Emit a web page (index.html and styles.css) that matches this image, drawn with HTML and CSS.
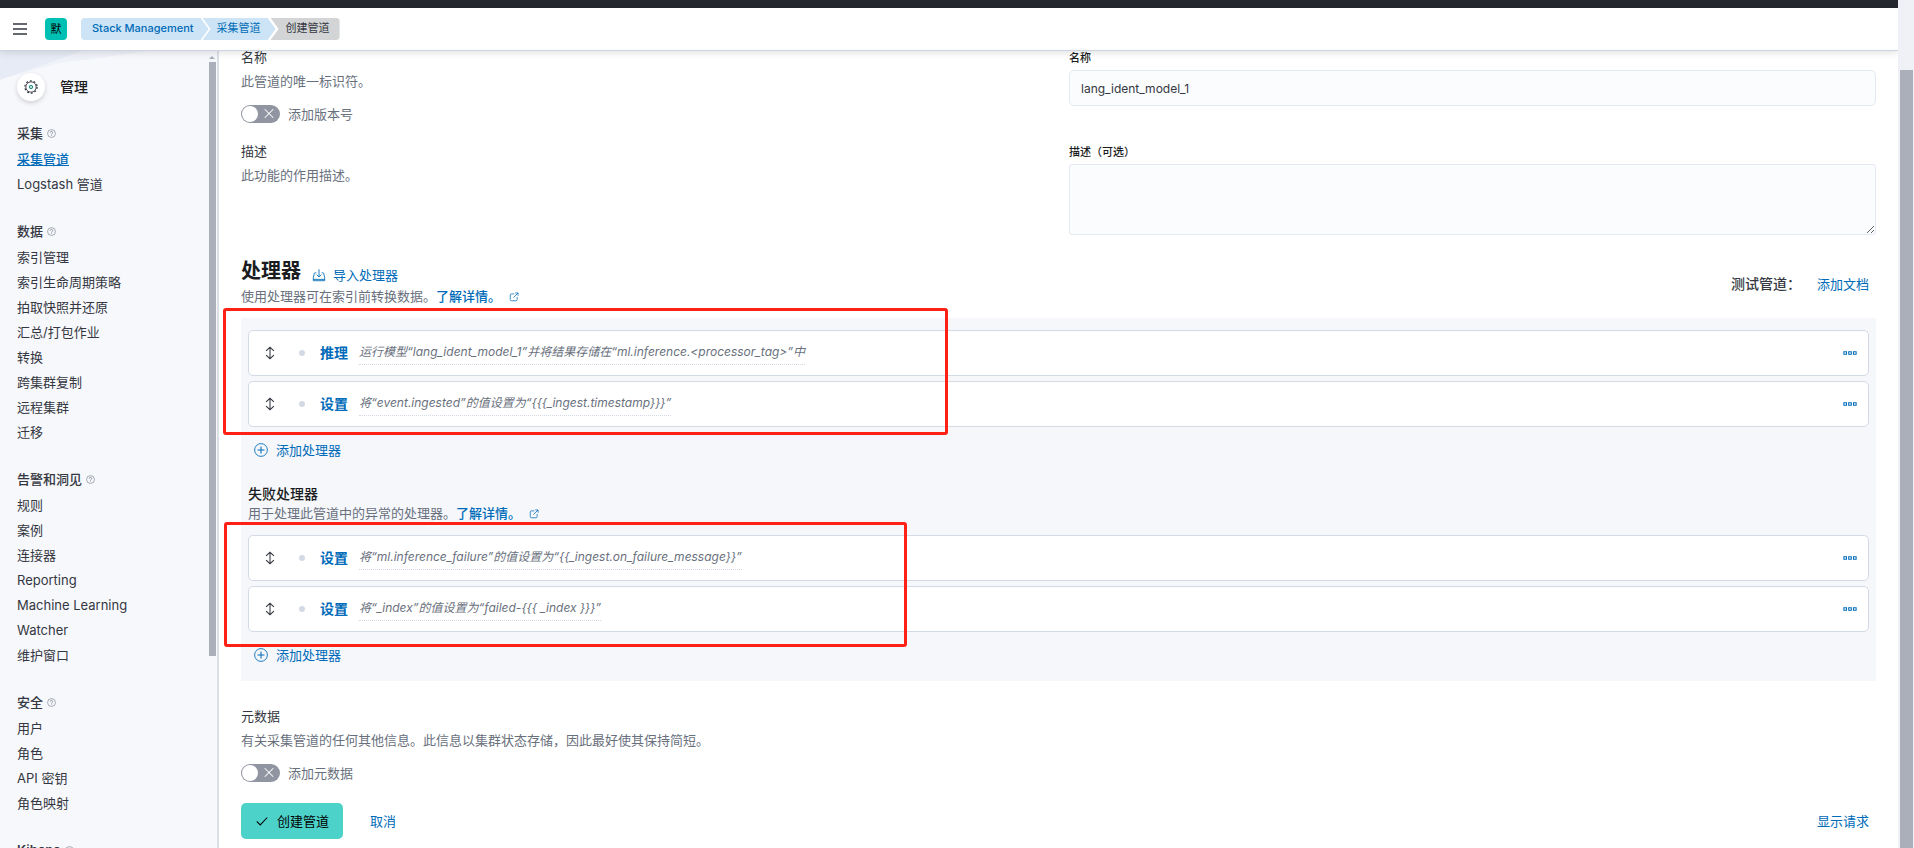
FILE: index.html
```html
<!DOCTYPE html>
<html lang="zh-CN">
<head>
<meta charset="utf-8">
<meta name="viewport" content="width=device-width, initial-scale=1">
<title>创建管道</title>
<link rel="stylesheet" href="styles.css">
</head>
<body>
<svg class="sprite" aria-hidden="true">
  <symbol id="i-help" viewBox="0 0 16 16"><circle cx="8" cy="8" r="7" fill="none" stroke="currentColor"/><path d="M5.8 6.4a2.2 2.2 0 1 1 3.3 1.9c-.7.4-1.1.8-1.1 1.6" fill="none" stroke="currentColor" stroke-width="1.2"/><circle cx="8" cy="11.8" r=".8" fill="currentColor"/></symbol>
  <symbol id="i-import" viewBox="0 0 16 16"><path d="M5 5.500H3.600a1 1 0 0 0-1 .8L1.500 11v3.500h13V11l-1.100-4.700a1 1 0 0 0-1-.8H11M1.500 13h13M8 1.500V10M5.300 7.500 8 10.200l2.700-2.700" fill="none" stroke="currentColor"/></symbol>
  <symbol id="i-popout" viewBox="0 0 16 16"><path d="M8.500 3H4a2 2 0 0 0-2 2v7a2 2 0 0 0 2 2h7a2 2 0 0 0 2-2V8M10 1.500h4.500V6M14.500 1.500 7 9" fill="none" stroke="currentColor" stroke-width="1.200"/></symbol>
  <symbol id="i-sort" viewBox="0 0 16 16"><path d="M8 1.500v13M3.500 5.500 8 1.500l4.500 4M3.500 10.500 8 14.500l4.500-4" fill="none" stroke="currentColor" stroke-width="1.200"/></symbol>
  <symbol id="i-plus" viewBox="0 0 16 16"><circle cx="8" cy="8" r="7.300" fill="none" stroke="currentColor"/><path d="M8 4v8M4 8h8" stroke="currentColor" stroke-width="1.200"/></symbol>
  <symbol id="i-more" viewBox="0 0 16 16"><path d="M1 6.500h3v3H1zM6.500 6.500h3v3h-3zM12 6.500h3v3h-3z" fill="none" stroke="currentColor" stroke-width="1.200"/></symbol>
  <symbol id="i-check" viewBox="0 0 16 16"><path d="m2 8.500 4 4 8-8.500" fill="none" stroke="currentColor" stroke-width="1.200"/></symbol>
</svg>
<div class="page">
  <div class="app">
    <div class="topbar"></div>
    <header class="header">
      <button class="menu" aria-label="菜单"><svg viewBox="0 0 14 12"><path d="M0 1h14M0 6h14M0 11h14" stroke="currentColor" stroke-width="1.600"/></svg></button>
      <button class="space">默</button>
      <nav class="crumbs" aria-label="面包屑">
        <a class="crumb first" href="#">Stack Management</a>
        <a class="crumb mid" href="#">采集管道</a>
        <span class="crumb last">创建管道</span>
      </nav>
    </header>
    <div class="body">
      <aside class="sidebar">
        <div class="side-scroll">
          <svg class="deco" viewBox="0 0 160 30" aria-hidden="true"><path d="M0 0h150L60 12 0 28z" fill="#eff2f9"/><path d="M0 0h82L0 29z" fill="#e6ebf5"/></svg>
          <div class="side-title">
            <span class="gear"><svg viewBox="0 0 16 16"><circle cx="8" cy="8" r="5.900" fill="none" stroke="#343741"/><circle cx="8" cy="8" r="7" fill="none" stroke="#343741" stroke-width="1.400" stroke-dasharray="2.200 2.198"/><circle cx="8" cy="8" r="1.700" fill="none" stroke="#017d73" stroke-width="1.200"/></svg></span>
            <h2>管理</h2>
          </div>
          <nav class="side-nav">
            <section><h3>采集 <svg><use href="#i-help"/></svg></h3>
              <a class="active" href="#">采集管道</a><a href="#">Logstash 管道</a></section>
            <section><h3>数据 <svg><use href="#i-help"/></svg></h3>
              <a href="#">索引管理</a><a href="#">索引生命周期策略</a><a href="#">拍取快照并还原</a><a href="#">汇总/打包作业</a><a href="#">转换</a><a href="#">跨集群复制</a><a href="#">远程集群</a><a href="#">迁移</a></section>
            <section><h3>告警和洞见 <svg><use href="#i-help"/></svg></h3>
              <a href="#">规则</a><a href="#">案例</a><a href="#">连接器</a><a href="#">Reporting</a><a href="#">Machine Learning</a><a href="#">Watcher</a><a href="#">维护窗口</a></section>
            <section><h3>安全 <svg><use href="#i-help"/></svg></h3>
              <a href="#">用户</a><a href="#">角色</a><a href="#">API 密钥</a><a href="#">角色映射</a></section>
            <section><h3>Kibana <svg><use href="#i-help"/></svg></h3></section>
          </nav>
        </div>
        <div class="side-track" aria-hidden="true"><i class="arrow"></i><i class="side-thumb"></i></div>
      </aside>
      <main class="main">
        <div class="row name-row">
          <div class="about">
            <h4>名称</h4>
            <p>此管道的唯一标识符。</p>
            <label class="switch"><input type="checkbox" role="switch"><span class="knob"></span>添加版本号</label>
          </div>
          <div class="field">
            <label for="name">名称</label>
            <input id="name" type="text" value="lang_ident_model_1">
          </div>
        </div>
        <div class="row desc-row">
          <div class="about">
            <h4>描述</h4>
            <p>此功能的作用描述。</p>
          </div>
          <div class="field">
            <label for="desc">描述（可选）</label>
            <textarea id="desc"></textarea>
          </div>
        </div>
        <div class="proc-head">
          <div>
            <div class="proc-title"><h1>处理器</h1><button class="link"><svg><use href="#i-import"/></svg>导入处理器</button></div>
            <p>使用处理器可在索引前转换数据。<a href="#">了解详情。<svg><use href="#i-popout"/></svg></a></p>
          </div>
          <div class="test"><strong>测试管道：</strong><button class="link">添加文档</button></div>
        </div>
        <div class="panel">
          <div class="group">
            <div class="item"><button class="move" aria-label="移动"><svg><use href="#i-sort"/></svg></button><i class="dot"></i><a class="type" href="#">推理</a><span class="text">运行模型“lang_ident_model_1”并将结果存储在“ml.inference.&lt;processor_tag&gt;”中</span><button class="more" aria-label="更多"><svg><use href="#i-more"/></svg></button></div>
            <div class="item"><button class="move" aria-label="移动"><svg><use href="#i-sort"/></svg></button><i class="dot"></i><a class="type" href="#">设置</a><span class="text">将“event.ingested”的值设置为“{{{_ingest.timestamp}}}”</span><button class="more" aria-label="更多"><svg><use href="#i-more"/></svg></button></div>
          </div>
          <button class="link add"><svg><use href="#i-plus"/></svg>添加处理器</button>
          <div class="fail-head">
            <h2>失败处理器</h2>
            <p>用于处理此管道中的异常的处理器。<a href="#">了解详情。<svg><use href="#i-popout"/></svg></a></p>
          </div>
          <div class="group">
            <div class="item"><button class="move" aria-label="移动"><svg><use href="#i-sort"/></svg></button><i class="dot"></i><a class="type" href="#">设置</a><span class="text">将“ml.inference_failure”的值设置为“{{_ingest.on_failure_message}}”</span><button class="more" aria-label="更多"><svg><use href="#i-more"/></svg></button></div>
            <div class="item"><button class="move" aria-label="移动"><svg><use href="#i-sort"/></svg></button><i class="dot"></i><a class="type" href="#">设置</a><span class="text">将“_index”的值设置为“failed-{{{ _index }}}”</span><button class="more" aria-label="更多"><svg><use href="#i-more"/></svg></button></div>
          </div>
          <button class="link add"><svg><use href="#i-plus"/></svg>添加处理器</button>
        </div>
        <div class="about meta">
          <h4>元数据</h4>
          <p>有关采集管道的任何其他信息。此信息以集群状态存储，因此最好使其保持简短。</p>
          <label class="switch"><input type="checkbox" role="switch"><span class="knob"></span>添加元数据</label>
        </div>
        <div class="actions">
          <button class="primary"><svg><use href="#i-check"/></svg>创建管道</button>
          <button class="link">取消</button>
          <button class="link show">显示请求</button>
        </div>
        <div class="mark mark-a"></div>
        <div class="mark mark-b"></div>
      </main>
    </div>
  </div>
  <div class="track" aria-hidden="true"><i class="thumb"></i></div>
</div>
</body>
</html>
```
FILE: styles.css
```css
* { box-sizing: border-box; }
body {
  margin: 0;
  font: 13px/20px Inter, "Noto Sans CJK SC", sans-serif;
  color: #343741;
  background: #fff;
}
h1, h2, h3, h4, p { margin: 0; }
button { font: inherit; color: inherit; border: 0; padding: 0; background: none; cursor: pointer; }
a { color: #006bb8; text-decoration: none; }
svg { flex: none; }
.sprite { position: absolute; width: 0; height: 0; }

.page { display: flex; height: 100vh; overflow: hidden; }
.app { flex: 1; min-width: 0; display: flex; flex-direction: column; }
.track { width: 16px; background: #eff1f6; padding: 70px 1px 0 2px; display: flex; position: relative; z-index: 3; }
.thumb { flex: 1; background: #abafb9; }

.topbar { height: 8px; background: #25282f; flex: none; }
.header {
  height: 43px;
  flex: none;
  display: flex;
  align-items: center;
  padding: 0 13px;
  border-bottom: 1px solid #ccd4e3;
  box-shadow: 0 1px 8px rgba(0, 0, 0, .14);
  position: relative;
  z-index: 2;
  background: #fff;
}
.menu { width: 14px; height: 12px; margin-right: 18px; display: flex; }
.menu svg { width: 14px; height: 12px; }
.space { width: 22px; height: 22px; border-radius: 4px; background: #00bfb3; color: #000; font-size: 11px; line-height: 22px; margin-right: 14px; }
.crumbs { display: flex; font-size: 11px; line-height: 20px; }
.crumb { height: 22px; background: #cce4f5; }
.first { padding: 0 15px 0 11px; font-weight: 500; border-radius: 4px 0 0 4px; clip-path: polygon(0 0, calc(100% - 8px) 0, 100% 50%, calc(100% - 8px) 100%, 0 100%); }
.mid { margin-left: -6px; padding: 0 15px 0 14px; clip-path: polygon(0 0, calc(100% - 8px) 0, 100% 50%, calc(100% - 8px) 100%, 0 100%, 8px 50%); }
.last { margin-left: -5px; padding: 0 10px 0 15px; border-radius: 0 4px 4px 0; background: #d3d4d6; clip-path: polygon(0 0, 100% 0, 100% 100%, 0 100%, 8px 50%); }

.body { flex: 1; min-height: 0; display: flex; }
.sidebar { width: 219px; flex: none; display: flex; background: #f7f8fc; border-right: 2px solid #dcdfe6; overflow: hidden; }
.side-scroll { flex: 1; position: relative; padding: 22px 0 0 17px; }
.deco { position: absolute; left: 0; top: 0; width: 160px; height: 30px; }
.side-title { display: flex; align-items: center; gap: 15px; height: 28px; position: relative; }
.side-title h2 { font-size: 14px; font-weight: 500; color: #1a1c21; }
.gear { width: 28px; height: 28px; border-radius: 50%; background: #fff; box-shadow: 0 2px 5px rgba(0, 0, 0, .16); display: flex; align-items: center; justify-content: center; }
.gear svg { width: 14px; height: 14px; }
.side-nav { padding-top: 18px; display: flex; flex-direction: column; gap: 20px; }
.side-nav section { display: flex; flex-direction: column; align-items: flex-start; }
.side-nav h3 { font-size: 13px; line-height: 28px; font-weight: 500; display: flex; align-items: center; gap: 4px; }
.side-nav h3 svg { width: 9px; height: 9px; color: #69707d; }
.side-nav a { color: #343741; line-height: 25px; }
.side-nav a.active { color: #006bb8; font-weight: 500; text-decoration: underline; }
.side-nav section:last-child h3 { font-weight: 600; }
.side-track { width: 8px; flex: none; margin-right: 1px; padding-top: 5px; display: flex; flex-direction: column; align-items: center; }
.arrow { border: 3px solid transparent; border-top: 0; border-bottom-color: #abafb9; margin-bottom: 3px; }
.side-thumb { width: 7px; height: 594px; background: #abafb9; }

.main { flex: 1; min-width: 0; padding: 0 22px; position: relative; background: #fff; display: flex; flex-direction: column; }
.row { display: grid; grid-template-columns: 1fr 1fr; gap: 21px; }
.name-row { height: 90px; }
.desc-row { padding-top: 4px; }
h4 { font-size: 13px; line-height: 20px; font-weight: 400; color: #343741; }
.about p { line-height: 20px; margin-top: 4px; color: #69707d; }
.row .about { margin-top: -4px; }
.switch { display: flex; align-items: center; gap: 8px; margin-top: 13px; color: #69707d; height: 20px; width: max-content; position: relative; }
.switch input { appearance: none; margin: 0; width: 39px; height: 18px; border-radius: 9px; background: #9095a1; }
.knob { position: absolute; left: 1px; top: 2px; width: 16px; height: 16px; border-radius: 50%; background: #fff; }
.knob::before, .knob::after { content: ""; position: absolute; left: 21px; top: 7px; width: 12px; height: 1px; background: #fff; transform: rotate(45deg); }
.knob::after { transform: rotate(-45deg); }
.field { display: flex; flex-direction: column; }
.field label { font-size: 11px; line-height: 14px; font-weight: 500; color: #1a1c21; margin-bottom: 5px; }
.field input, .field textarea { font: 12px/18px Inter, "Noto Sans CJK SC", sans-serif; color: #343741; background: #fbfcfd; border: 1px solid #e4e8f2; border-radius: 5px; width: 100%; padding: 0 11px; }
.field input { height: 36px; }
.field textarea { height: 71px; border-radius: 3px; display: block; }

.link { color: #006bb8; display: flex; align-items: center; gap: 8px; line-height: 20px; }
.link svg { width: 14px; height: 14px; }
.proc-head { display: flex; justify-content: space-between; align-items: center; padding: 22px 7px 0 0; }
.proc-title { display: flex; align-items: flex-end; gap: 11px; margin-bottom: 1px; }
.proc-title h1 { font-size: 20px; line-height: 28px; font-weight: 700; color: #1a1c21; }
.proc-title .link { gap: 7px; }
p { color: #69707d; line-height: 20px; }
p a { font-weight: 500; }
p a svg { width: 10px; height: 10px; margin-left: 8px; vertical-align: -1px; }
.test { display: flex; align-items: center; gap: 16px; padding-top: 4px; }
.test strong { font-size: 14px; font-weight: 500; }
.panel { background: #f5f7fb; margin-top: 12px; padding: 12px 7px 16px; }
.group { display: flex; flex-direction: column; gap: 5px; }
.item { height: 46px; display: flex; align-items: center; background: #fff; border: 1px solid #d3dae6; border-radius: 5px; padding: 0 11px 0 14px; }
.move, .more { width: 14px; height: 14px; display: flex; }
.move svg, .more svg { width: 14px; height: 14px; }
.move { color: #343741; }
.dot { width: 6px; height: 6px; border-radius: 50%; background: #d3dae6; margin: 0 15px 0 22px; }
.type { font-size: 14px; font-weight: 700; }
.text { margin-left: 11px; font-size: 12px; line-height: 22px; font-style: italic; color: #69707d; height: 24px; border-bottom: 1px dotted #d3dae6; }
.more { margin-left: auto; color: #006bb8; }
.add { margin: 13px 0 0 6px; }
.fail-head { padding: 24px 0 12px; }
.fail-head h2 { font-size: 14px; line-height: 20px; font-weight: 500; color: #1a1c21; }
.fail-head p { line-height: 19px; }
.meta { margin-top: 25px; }
.actions { display: flex; align-items: center; margin-top: 20px; padding-right: 7px; }
.primary { height: 36px; padding: 0 14px; border-radius: 5px; background: #4dd2ca; color: #000; display: flex; align-items: center; gap: 8px; }
.primary svg { width: 14px; height: 14px; }
.primary + .link { margin-left: 27px; }
.show { margin-left: auto; }

.mark { position: absolute; border: 3px solid #ff2116; border-radius: 3px; pointer-events: none; }
.mark-a { left: 4px; top: 257px; width: 725px; height: 127px; }
.mark-b { left: 5px; top: 471px; width: 683px; height: 125px; }
```
